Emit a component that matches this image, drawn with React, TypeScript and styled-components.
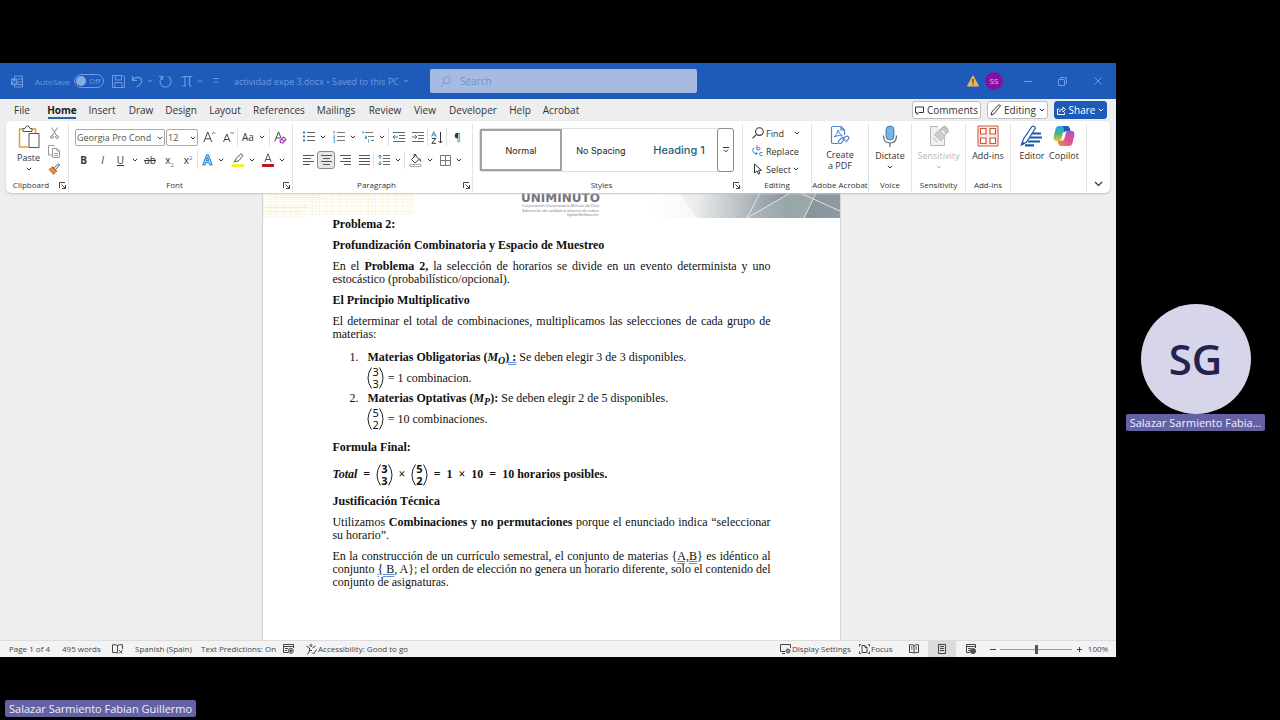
import React from "react";
import styled, { createGlobalStyle, css } from "styled-components";

const ui = `"Open Sans", "Noto Sans", sans-serif`;
const serif = `"Liberation Serif", serif`;

const GlobalStyle = createGlobalStyle`
  *, *::before, *::after { box-sizing: border-box; }
  body { margin: 0; background: #000; font-family: ${ui}; color: #333; }
  button, input, select { font-family: inherit; color: inherit; }
  h1, h2, p, ol { margin: 0; padding: 0; }
`;

/* ---------- Meeting stage ---------- */

const Stage = styled.div`
  min-height: 100vh;
  background: #000;
  display: grid;
  grid-template-columns: minmax(0, 1fr) 164px;
  grid-template-rows: 63px minmax(0, 1fr) 63px;
`;

const Participant = styled.aside`
  grid-column: 2;
  grid-row: 2;
  display: flex;
  flex-direction: column;
  align-items: center;
  justify-content: center;
  padding: 14px 5px 0 0;
`;

const BigAvatar = styled.div`
  width: 110px;
  height: 110px;
  border-radius: 50%;
  background: #d6d5e9;
  color: #25224f;
  display: flex;
  align-items: center;
  justify-content: center;
  font: 600 42px/1 ${ui};
`;

const NameTag = styled.div`
  height: 17px;
  padding: 0 4px;
  border-radius: 2px;
  background: #6462a3;
  color: #f1f0fa;
  font: 400 11px/17px ${ui};
  white-space: nowrap;
`;

const Footer = styled.footer`
  grid-column: 1 / -1;
  grid-row: 3;
  display: flex;
  align-items: flex-end;
  padding: 0 5px 3px;
`;

/* ---------- Window ---------- */

const Window = styled.main`
  grid-row: 2;
  display: flex;
  flex-direction: column;
  min-width: 0;
  background: #eeeeee;
  overflow: hidden;
`;

const TitleBar = styled.header`
  height: 36px;
  flex: none;
  display: flex;
  align-items: center;
  background: #1d5ab9;
  color: #6d9ae2;
  font-size: 9px;
`;

const TitleLeft = styled.div`
  flex: 0 0 430px;
  display: flex;
  align-items: center;
  padding-left: 11px;
`;

const BarButton = styled.button<{ $w: number }>`
  width: ${(p) => p.$w}px;
  height: 20px;
  padding: 0;
  border: 0;
  background: none;
  display: flex;
  align-items: center;
  justify-content: center;
  gap: 4px;
`;

const AutoSave = styled.label`
  display: flex;
  align-items: center;
  gap: 4px;
  margin: 0 6px 0 12px;
  font-size: 8px;
`;

const Toggle = styled.span`
  position: relative;
  width: 30px;
  height: 14px;
  border: 1px solid #6d9ae2;
  border-radius: 7px;
  padding-left: 14px;
  line-height: 12px;

  input {
    position: absolute;
    inset: 0;
    margin: 0;
    opacity: 0;
  }
  &::before {
    content: "";
    position: absolute;
    left: 1px;
    top: 1px;
    width: 10px;
    height: 10px;
    border-radius: 50%;
    background: #86ace8;
  }
`;

const FileName = styled.button`
  border: 0;
  padding: 0;
  margin-left: 10px;
  background: none;
  display: flex;
  align-items: center;
  gap: 4px;
  font-size: 9px;
  white-space: nowrap;
`;

const SearchBox = styled.label`
  flex: 0 1 267px;
  height: 24px;
  border-radius: 2px;
  background: #a6bbdf;
  display: flex;
  align-items: center;
  gap: 9px;
  padding: 0 10px;

  input {
    flex: 1;
    min-width: 0;
    border: 0;
    padding: 0;
    background: none;
    font-size: 10px;
    outline: 0;
  }
  input::placeholder { color: #6d92d4; opacity: 1; }
`;

const TitleRight = styled.div`
  margin-left: auto;
  display: flex;
  align-items: center;
  padding-right: 1px;
`;

const SmallAvatar = styled.button`
  width: 18px;
  height: 18px;
  margin: 0 7px 0 6px;
  padding: 0;
  border: 0;
  border-radius: 50%;
  background: #85109f;
  color: #e6c8ee;
  font-size: 8px;
  line-height: 18px;
`;

/* ---------- Tabs ---------- */

const TabRow = styled.nav`
  flex: none;
  height: 22px;
  display: flex;
  align-items: center;
  padding: 0 9px 0 6px;
`;

const Tab = styled.button<{ $w: number; $active?: boolean }>`
  width: ${(p) => p.$w}px;
  height: 22px;
  padding: 0;
  border: 0;
  background: none;
  font-size: 10px;
  white-space: nowrap;
  display: flex;
  align-items: center;
  justify-content: center;
  ${(p) =>
    p.$active &&
    css`
      font-weight: 700;
      color: #1c1c1c;
      position: relative;
      &::after {
        content: "";
        position: absolute;
        left: 10px;
        right: 10px;
        bottom: 2px;
        height: 2px;
        background: #2a63a8;
      }
    `}
`;

const TabActions = styled.div`
  margin-left: auto;
  display: flex;
  gap: 6px;
`;

const ActionButton = styled.button<{ $w: number; $primary?: boolean }>`
  width: ${(p) => p.$w}px;
  height: 18px;
  padding: 0;
  border: 1px solid ${(p) => (p.$primary ? "#1d5ab9" : "#bdbdbd")};
  border-radius: 3px;
  background: ${(p) => (p.$primary ? "#1d5ab9" : "#fff")};
  color: ${(p) => (p.$primary ? "#fff" : "#333")};
  display: flex;
  align-items: center;
  justify-content: center;
  gap: 3px;
  font-size: 10px;
  white-space: nowrap;
`;

/* ---------- Ribbon ---------- */

const Ribbon = styled.section`
  flex: none;
  height: 72px;
  margin: 0 6px;
  padding: 3px 0 1px;
  display: flex;
  background: #fff;
  border-radius: 5px;
  box-shadow: 0 1px 2px #c4c4c4;
  position: relative;
`;

const Group = styled.div<{ $w?: number }>`
  ${(p) => (p.$w ? `flex: 0 0 ${p.$w}px;` : "flex: 1 1 0;")}
  min-width: 0;
  display: flex;
  flex-direction: column;
  border-right: 1px solid #e3e3e3;
`;

const GroupBody = styled.div<{ $pad?: string }>`
  flex: 1;
  display: flex;
  padding: ${(p) => p.$pad ?? "0"};
`;

const GroupLabel = styled.div`
  height: 14px;
  display: flex;
  align-items: center;
  justify-content: center;
  font-size: 8px;
  line-height: 14px;
  white-space: nowrap;

  span { flex: 1; text-align: center; }
`;

const Launcher = styled.button`
  width: 12px;
  height: 12px;
  padding: 0;
  border: 0;
  background: none;
  display: flex;
  align-items: center;
  justify-content: center;
`;

const Rows = styled.div`
  flex: 1;
  display: flex;
  flex-direction: column;
  gap: 5px;
  padding-top: 4px;
`;

const ToolRow = styled.div<{ $pad: number }>`
  height: 18px;
  display: flex;
  align-items: center;
  padding-left: ${(p) => p.$pad}px;
`;

const Tool = styled.button<{ $w: number; $on?: boolean }>`
  width: ${(p) => p.$w}px;
  height: 18px;
  flex: none;
  padding: 0;
  border: ${(p) => (p.$on ? "1px solid #8a8a8a" : "0")};
  border-radius: 3px;
  background: ${(p) => (p.$on ? "#e6e6e6" : "none")};
  display: flex;
  align-items: center;
  justify-content: center;
  gap: 5px;
  font-size: 10px;
  line-height: 18px;

  sub, sup { font-size: 6px; line-height: 0; color: #2a86c8; }
`;

const Divider = styled.span`
  width: 1px;
  height: 18px;
  background: #e1e1e1;
`;

const Picker = styled.span<{ $w: number }>`
  position: relative;
  width: ${(p) => p.$w}px;
  height: 17px;
  margin-right: 1px;

  select {
    appearance: none;
    display: block;
    width: 100%;
    height: 17px;
    padding: 0 0 0 1px;
    border: 1px solid #a8a8a8;
    border-radius: 2px;
    background: #fff;
    font-size: 9px;
    line-height: 15px;
    color: #4e5546;
  }
  svg {
    position: absolute;
    right: 2px;
    top: 7px;
    color: #333;
    pointer-events: none;
  }
`;

const BigTool = styled.button<{ $muted?: boolean }>`
  flex: 1;
  min-width: 0;
  padding: 0;
  border: 0;
  background: none;
  color: ${(p) => (p.$muted ? "#b9b9b9" : "#333")};
  display: flex;
  flex-direction: column;
  align-items: center;
  font-size: 9px;
  line-height: 11px;
  white-space: nowrap;

  > svg:first-child { margin: 1px 0 3px; }
  span + svg { margin-top: 4px; }
`;

const ClipColumn = styled.div`
  display: flex;
  flex-direction: column;
  width: 20px;
`;

const Gallery = styled.div`
  flex: 1;
  height: 44px;
  margin: 4px 8px 0 6px;
  display: flex;
  border: 1px solid #e0e0e0;
  border-radius: 3px;
`;

const StyleCard = styled.button<{ $on?: boolean; $heading?: boolean }>`
  flex: 1;
  min-width: 0;
  padding: 0;
  background: none;
  border: ${(p) => (p.$on ? "2px solid #a3a3a3" : "0")};
  font-family: Inter, sans-serif;
  font-size: ${(p) => (p.$heading ? 11 : 9)}px;
  font-weight: ${(p) => (p.$heading ? 500 : 400)};
  color: ${(p) => (p.$heading ? "#1d6170" : "#222")};
  white-space: nowrap;
`;

const MoreButton = styled.button`
  width: 17px;
  margin: -1px;
  padding: 0;
  border: 1px solid #8d8d8d;
  border-radius: 3px;
  background: #fff;
  display: flex;
  align-items: center;
  justify-content: center;
`;

const EditList = styled.div`
  flex: 1;
  display: flex;
  flex-direction: column;
  align-items: flex-start;
  padding-left: 9px;
`;

const EditButton = styled.button<{ $wide?: boolean }>`
  height: 18px;
  padding: 0;
  border: 0;
  background: none;
  display: flex;
  align-items: center;
  gap: 2px;
  font-size: 9px;
  ${(p) =>
    p.$wide &&
    css`
      width: 48px;
      svg:last-child { margin-left: auto; }
    `}
`;

const Collapse = styled.button`
  flex: 0 0 23px;
  padding: 0 0 5px;
  border: 0;
  background: none;
  display: flex;
  align-items: flex-end;
  justify-content: center;
`;

/* ---------- Document ---------- */

const Canvas = styled.section`
  flex: 1;
  display: flex;
  justify-content: center;
  padding-right: 13px;
`;

const Paper = styled.article`
  flex: 0 1 577px;
  background: #fff;
  border: solid #d4d4d4;
  border-width: 0 1px;
`;

const Letterhead = styled.header`
  height: 25px;
  display: flex;
  justify-content: space-between;
`;

const Logo = styled.div`
  flex: 1;
  text-align: center;
  padding-left: 57px;
  white-space: nowrap;
  font: 400 4px/5px "Noto Sans", sans-serif;
  color: #777c8c;

  strong {
    display: block;
    padding-top: 1px;
    font: 700 12px/9px "DejaVu Sans", sans-serif;
    color: #73747a;
  }
  small { display: block; font-size: 3px; line-height: 4px; padding-left: 44px; }
`;

const Body = styled.div`
  padding: 0 69px;
  display: flex;
  flex-direction: column;
  gap: 8px;
  font: 400 12px/13px ${serif};
  color: #111;

  h2 { font: inherit; font-weight: 700; }
  p { text-align: justify; }
  sub { line-height: 0; }
`;

const FullLine = styled.span`
  display: block;
  white-space: nowrap;
  text-align-last: justify;
`;

const Steps = styled.ol`
  padding-top: 2px;
  && { padding-left: 35px; }
  li::marker { content: counter(list-item) ".\\00a0\\00a0\\00a0"; }
`;

const Equation = styled.div<{ $h: number; $bold?: boolean }>`
  height: ${(p) => p.$h}px;
  display: flex;
  align-items: center;
  gap: ${(p) => (p.$bold ? 6 : 4)}px;
  font-weight: ${(p) => (p.$bold ? 700 : 400)};
`;

const Pair = styled.span`
  display: inline-flex;
  align-items: center;

  span {
    font-family: "Noto Sans", sans-serif;
    font-size: 11px;
    line-height: 12px;
  }
`;

const Flag = styled.u`
  text-decoration: underline double #5b8ed8;
  text-underline-offset: 1px;
`;

/* ---------- Status bar ---------- */

const StatusBar = styled.footer`
  flex: none;
  height: 17px;
  display: flex;
  align-items: center;
  background: #f3f3f3;
  border-top: 1px solid #dcdcdc;
  padding: 0 6px 0 9px;
  font-size: 8px;
  color: #444;
`;

const Status = styled.button<{ $w: number; $on?: boolean; $center?: boolean }>`
  width: ${(p) => p.$w}px;
  height: 16px;
  flex: none;
  padding: 0;
  border: 0;
  background: ${(p) => (p.$on ? "#dcdcdc" : "none")};
  display: flex;
  align-items: center;
  justify-content: ${(p) => (p.$center ? "center" : "flex-start")};
  gap: 1px;
  font-size: 8px;
  line-height: 14px;
  white-space: nowrap;
`;

const StatusEnd = styled.div`
  margin-left: auto;
  display: flex;
  align-items: center;
`;

const Zoom = styled.input`
  appearance: none;
  width: 72px;
  height: 10px;
  margin: 0;
  background: linear-gradient(#9a9a9a, #9a9a9a) center / 100% 1px no-repeat;

  &::-webkit-slider-thumb {
    appearance: none;
    width: 3px;
    height: 9px;
    background: #555;
  }
`;

/* ---------- Icons ---------- */

type IconProps = { w: number; h: number; color?: string; children: React.ReactNode };
const Icon = ({ w, h, color = "currentColor", children }: IconProps) => (
  <svg width={w} height={h} viewBox={`0 0 ${w} ${h}`} fill="none" stroke={color} strokeWidth="1" aria-hidden="true">
    {children}
  </svg>
);

const Chev = ({ big }: { big?: boolean }) =>
  big ? (
    <Icon w={9} h={6}><path d="M1 1l3.5 3.5L8 1" strokeWidth="1.2" /></Icon>
  ) : (
    <Icon w={6} h={4}><path d="M.8.8L3 3 5.2.8" strokeWidth="1" /></Icon>
  );

const Launch = () => (
  <Icon w={7} h={7}><path d="M.5 6V.5H6M2.5 2.5l4 4M6.5 3v3.5H3" strokeWidth=".9" /></Icon>
);

const lines = (rows: [number, number][], y0 = 1, step = 3) =>
  rows.map(([a, b], i) => `M${a} ${y0 + 0.5 + i * step}H${b}`).join("");

const AlignIcon = ({ kind }: { kind: "l" | "c" | "r" | "j" }) => {
  const map: Record<string, [number, number][]> = {
    l: [[0, 11], [0, 8], [0, 11], [0, 7]],
    c: [[0, 11], [2, 9], [0, 11], [2, 9]],
    r: [[0, 11], [3, 11], [0, 11], [4, 11]],
    j: [[0, 11], [0, 11], [0, 11], [0, 11]],
  };
  return <Icon w={11} h={12} color="#555"><path d={lines(map[kind])} /></Icon>;
};

const Bullets = () => (
  <Icon w={12} h={12} color="#666">
    <path d="M4 1.5H12M4 5.5H12M4 9.5H12" />
    <path d="M0 1.5H2M0 5.5H2M0 9.5H2" stroke="#2b7fb8" strokeWidth="2" />
  </Icon>
);
const Numbers = () => (
  <Icon w={12} h={12} color="#777">
    <path d="M4 1.5H12M4 5.5H12M4 9.5H12" />
    <path d="M0 .8L1.2.3V3M.2 4.8H2L.3 7H2.2M.2 8.8H2L1 10l1 .6-.6 1H.2" stroke="#3595cf" strokeWidth=".8" />
  </Icon>
);
const Multi = () => (
  <Icon w={12} h={12} color="#777">
    <path d="M3 1.5H11M6 5.5H12M9 9.5H12" />
    <path d="M.4.8L1.2.3V3M3 5.2h1.6V7.5H3V6.4h1.6M6.6 8.6V11.5" stroke="#3595cf" strokeWidth=".9" />
  </Icon>
);
const Indent = ({ out }: { out?: boolean }) => (
  <Icon w={12} h={11} color="#666">
    <path d="M0 .5H12M6 3.5H12M6 6.5H12M0 9.5H12" />
    <path d={out ? "M5 5H0M2 3l-2 2 2 2" : "M0 5H5M3 3l2 2-2 2"} stroke="#2b7fb8" />
  </Icon>
);
const Sort = () => (
  <Icon w={12} h={13} color="#333">
    <path d="M.6 5.5L2.8.5 5 5.5M1.4 4H4.2" stroke="#2b8fd0" />
    <path d="M.8 7.500H4.800L.8 12.300H5M9.500 1V12M7.500 10l2 2 2-2" />
  </Icon>
);
const LineSpace = () => (
  <Icon w={12} h={12} color="#666">
    <path d="M5 1.500H12M5 4.500H12M5 7.500H12M5 10.500H12" />
    <path d="M2 1V5M.5 2.500L2 1l1.500 1.500M2 7V11M.5 9.500L2 11l1.500-1.500" stroke="#2b7fb8" />
  </Icon>
);
const Bucket = () => (
  <Icon w={13} h={13} color="#444">
    <path d="M2.500 5.500L6.500 1.500l3.500 4-4 3.500zM5 3V.5h2V2" />
    <path d="M10.500 4.500q1.500 2 .5 3" stroke="#2b7fb8" strokeWidth="1.400" />
    <path d="M1 10.500H12V12.500H1z" stroke="#aaa" />
  </Icon>
);
const Borders = () => (
  <Icon w={11} h={11} color="#777">
    <path d="M.5.5H10.500V10.500H.5zM5.500 0V11M0 5.500H11" />
  </Icon>
);

const PasteIcon = () => (
  <Icon w={22} h={24} color="#555">
    <path d="M5 4H1.500V22H10M14 4H17.500V8" stroke="#e79a3c" strokeWidth="1.500" />
    <path d="M5 6.500V3.500H7Q7.500 1 9.500 1T12 3.500H14V6.500zM11 8.500H21V22.500H11z" fill="#fff" />
  </Icon>
);
const Cut = () => (
  <Icon w={9} h={12} color="#8b8b8b">
    <path d="M1.500.5L6.500 8.500M7.500.5L2.500 8.500" />
    <circle cx="2" cy="10" r="1.400" /><circle cx="7" cy="10" r="1.400" />
  </Icon>
);
const Copy = () => (
  <Icon w={12} h={13} color="#9a9a9a">
    <path d="M4 10H.5V.5H6L7 1.500M4.500 3.500H9L11.500 6V12.500H4.500zM9 3.500V6h2.500M6 8.500h4M6 10.500h4" />
  </Icon>
);
const Painter = () => (
  <Icon w={12} h={12} color="#555">
    <path d="M1 6.500L4.500 4l4 4.500L5.500 11.500z" fill="#eb8b35" stroke="#d97a25" />
    <path d="M4.500 3.500l4.500 5M6.500 4.500L10.500.8l1 1.200L8 6" fill="#fff" />
  </Icon>
);

const TextEffects = () => (
  <Icon w={11} h={12} color="#1f6fb5">
    <path d="M.8 11L4.500.8H6.500L10.200 11H7.800L7 8.500H4L3.200 11zM4.500 6.500h2L5.500 3z" fill="#a9d5f2" strokeWidth=".9" />
  </Icon>
);
const Highlighter = () => (
  <Icon w={12} h={14} color="#555">
    <path d="M3 8L4.500 5 9 .8l2 1.700L7 7.500 4 8.800zM1.500 9.500L3 8" />
    <path d="M0 12.500H12" stroke="#f5f032" strokeWidth="3" />
  </Icon>
);
const FontColor = () => (
  <Icon w={12} h={14} color="#555">
    <path d="M2.800 9L6 .8 9.200 9M4 6.500H8" />
    <path d="M0 12.500H12" stroke="#bd1622" strokeWidth="3" />
  </Icon>
);
const GrowFont = ({ down }: { down?: boolean }) => (
  <Icon w={13} h={12} color="#444">
    {down ? <path d="M1.500 11L4.800 3l3.300 8M2.800 8.500h4" /> : <path d="M.8 11L4.800 1l4 10M2.300 7.800h5" />}
    <path d={down ? "M8.500 1l1.700 1.800L12 1" : "M9 3l1.600-1.800L12.300 3"} stroke="#2b7fb8" />
  </Icon>
);
const ClearFormat = () => (
  <Icon w={13} h={13} color="#444">
    <path d="M.8 10.500L4.500.8 7 7M2.200 7h4" />
    <path d="M6 9.500L9.500 6l2.500 2.500L8.800 12 6.500 11.500zM7.500 8l2.500 2.500" stroke="#a23fb8" strokeWidth="1.200" />
  </Icon>
);

const PdfIcon = () => (
  <Icon w={20} h={21} color="#4c83d4">
    <path d="M8 18.500H3Q1.500 18.500 1.500 17V3Q1.500 1.500 3 1.500H11L14.500 5V10M11 1.500V5h3.500" strokeWidth="1.200" />
    <path d="M4 12Q8 9 8 5q1 4 4.500 6Q8 9.500 4 12" />
    <path d="M12.500 14.500l3-3q2-1 3 .5t-.5 2.500l-2.500 2.500M15 14l-3 3q-1 2-2.500 1.500t-1-2.500l3-3q1.500-1 2.500 0" strokeWidth="1.200" />
  </Icon>
);
const Mic = () => (
  <Icon w={16} h={22} color="#666">
    <rect x="4" y="1" width="8" height="14" rx="4" fill="#78b4e4" stroke="#3a81bf" />
    <path d="M1.500 10.500q0 7.500 6.500 7.500t6.500-7.500M8 18V22" strokeWidth="1.200" />
  </Icon>
);
const SensitivityIcon = () => (
  <Icon w={20} h={22} color="#b5b5b5">
    <path d="M9 1.500H1.500V20.500H15.500V13" fill="#f0f0f0" />
    <path d="M4 12.500l4.500 5M5.500 9.500l6 6.500L16.500 11 10.500 5z" fill="#cfcfcf" />
    <path d="M11 6l3-4 5 4.500-3.500 3M12 3l6 5M15 .8l4.500 4" strokeWidth="1.500" />
  </Icon>
);
const AddIns = () => (
  <Icon w={22} h={22} color="#d2583c">
    <path d="M1 1H21V21H1z" fill="#fbeae5" />
    <path d="M3.500 3.500H9V9H3.500zM13 3.500h5.500V9H13zM3.500 13H9v5.500H3.500zM13 13h5.500v5.500H13z" fill="#fff" strokeWidth="1.200" />
  </Icon>
);
const EditorIcon = () => (
  <Icon w={24} h={22} color="#1f57ad">
    <path d="M12 8.500h9M9.500 12.500H22M8 16.500h12M5 20.300h9" strokeWidth="2.200" />
    <path d="M1.500 20L3.500 14 12 1.500q2-1 3.500 1.500L6.500 17z" fill="#fff" strokeWidth="1.200" />
    <path d="M1.500 20l1-3 1.800 1.500z" fill="#1f57ad" />
  </Icon>
);
const Copilot = () => (
  <svg width="22" height="22" viewBox="0 0 22 22" aria-hidden="true">
    <defs>
      <linearGradient id="cpA" x1="0" y1="0" x2="0" y2="1">
        <stop offset="0" stopColor="#27a5e8" /><stop offset=".5" stopColor="#3fb68b" /><stop offset="1" stopColor="#f2c22c" />
      </linearGradient>
      <linearGradient id="cpB" x1="1" y1="0" x2="0" y2="1">
        <stop offset="0" stopColor="#a04fe0" /><stop offset=".5" stopColor="#e2508f" /><stop offset="1" stopColor="#f9903c" />
      </linearGradient>
    </defs>
    <path d="M6 1h8q2 0 2.600 2l.8 3h-4q-1.500 0-2 1.500L9.500 14Q9 16 7 16H3.500Q0 16 .7 12L2.500 4Q3.300 1 6 1z" fill="url(#cpA)" />
    <path d="M10 1h4q2 0 2.600 2l.8 3h-4q-1.300 0-1.800 1z" fill="#2256c9" />
    <path d="M16 21H8q-2 0-2.600-2l-.8-3h4q1.500 0 2-1.500l1.900-6.500Q13 6 15 6h3.500q3.500 0 2.800 4L19.500 18q-.8 3-3.500 3z" fill="url(#cpB)" />
    <path d="M10 7.500h3l-2 7h-3z" fill="#fff" />
  </svg>
);

const SearchIcon = ({ s = 11 }: { s?: number }) => (
  <svg width={s} height={s} viewBox="0 0 11 11" fill="none" stroke="currentColor" aria-hidden="true">
    <circle cx="6.800" cy="4.200" r="3.500" /><path d="M4.200 6.800L.5 10.500" />
  </svg>
);
const ReplaceIcon = () => (
  <Icon w={12} h={12} color="#2b8fc8">
    <path d="M5 .5V5h1.500Q8 5 8 3.700T6.500 2.500H5" stroke="#b44ac0" />
    <path d="M2.500 3Q.5 3 .8 5.500T3 8.500H5M3.500 6.800L5.200 8.500 3.500 10.300M10.500 7.500Q7.500 6.700 7.500 9t3 1.700" />
  </Icon>
);
const Cursor = () => (
  <Icon w={12} h={12}><path d="M2.500 1V10L5 8l1.500 3.200 1.400-.7L6.500 7.300H9.500z" /></Icon>
);

const WordIcon = () => (
  <Icon w={12} h={13}>
    <path d="M3.500 3.500V1H11.500V12H3.500V10M7 4H11M7 7H11M7 9.500h4" />
    <path d="M0 3.500H6.500V10H0z" fill="currentColor" stroke="none" />
    <path d="M1.500 5l1 3.500L3.300 6l.8 2.500L5 5" stroke="#1d5ab9" strokeWidth=".8" />
  </Icon>
);
const Save = () => (
  <Icon w={13} h={13}><path d="M.5.5H11L12.500 2V12.500H.5zM3.500.5V5H9.500V.5M3 12V7.500h7V12" /></Icon>
);
const Undo = () => (
  <Icon w={12} h={13}><path d="M1.500 1v4.500H6M1.500 5.500Q4 1.500 8 2.500q3.500 1.500 2.500 5Q9.500 9.500 5.500 12" strokeWidth="1.200" /></Icon>
);
const Redo = () => (
  <Icon w={13} h={13}><path d="M0 1.500H3.500V5M8.500 1.500q4 1 3.500 5.500-1 5-5.500 5T1 7Q1 4 3.500 2" strokeWidth="1.200" /></Icon>
);
const Pi = () => (
  <Icon w={12} h={12}><path d="M.5 3Q1 1.500 3 1.500H11.500M4 1.500V11M1.500 11H5M8.500 1.500V10q0 1.200 2 1" strokeWidth="1.200" /></Icon>
);
const Customize = () => (
  <Icon w={6} h={6}><path d="M0 .5H6M1 2.800l2 2 2-2" /></Icon>
);
const Warning = () => (
  <Icon w={12} h={12}>
    <path d="M6 .8L11.500 11H.5z" fill="#f0b352" stroke="#e6b668" />
    <path d="M6 4v3.500M6 8.500v1.300" stroke="#493718" strokeWidth="1.300" />
  </Icon>
);

const tabs: [string, number][] = [
  ["File", 32], ["Home", 48], ["Insert", 32], ["Draw", 46], ["Design", 34], ["Layout", 54], ["References", 54],
  ["Mailings", 60], ["Review", 38], ["View", 42], ["Developer", 54], ["Help", 40], ["Acrobat", 42],
];

const Binomial = ({ top, bottom }: { top: number; bottom: number }) => (
  <Pair>
    <Icon w={5} h={22} color="#222"><path d="M4.500.5Q-2.500 11 4.500 21.500" /></Icon>
    <span>{top}<br />{bottom}</span>
    <Icon w={5} h={22} color="#222"><path d="M.5.5Q7.500 11 .5 21.500" /></Icon>
  </Pair>
);

const LeftArt = () => (
  <svg width="151" height="25" viewBox="0 0 151 25" aria-hidden="true">
    <defs>
      <pattern id="mesh" width="7" height="6" patternUnits="userSpaceOnUse">
        <path d="M0 .5H7M.5 0V6M3 3H7" stroke="#f6ecc0" fill="none" strokeWidth=".6" />
      </pattern>
    </defs>
    <path d="M0 0H151V22H60L40 25H0z" fill="#fffef8" />
    <path d="M0 0H151V22H60L40 25H0z" fill="url(#mesh)" opacity=".8" />
    <path d="M0 14.500H45M10 4.500H60M5 18.500H35" stroke="#f7ebbd" strokeWidth=".8" />
  </svg>
);
const RightArt = () => (
  <svg width="190" height="25" viewBox="0 0 190 25" aria-hidden="true">
    <defs>
      <linearGradient id="steel">
        <stop offset="0" stopColor="#fff" /><stop offset=".25" stopColor="#e9ebec" />
        <stop offset=".5" stopColor="#b3bbbf" /><stop offset=".72" stopColor="#82919a" /><stop offset="1" stopColor="#8f9aa0" />
      </linearGradient>
    </defs>
    <path d="M0 0H190V25H0z" fill="url(#steel)" />
    <path d="M30 0L47 25H0V0z" fill="#fff" opacity=".6" />
    <path d="M97 25L140 0H165L155 25z" fill="#aebbb9" opacity=".5" />
    <path d="M97 25L140 0M97 25L110 0M154 25L166 0M150 0L190 18" stroke="#e8eced" strokeWidth=".9" fill="none" />
  </svg>
);

export default function App() {
  return (
    <>
      <GlobalStyle />
      <Stage>
        <Window>
          <TitleBar>
            <TitleLeft>
              <WordIcon />
              <AutoSave>
                AutoSave
                <Toggle><input type="checkbox" aria-label="AutoSave" />Off</Toggle>
              </AutoSave>
              <BarButton $w={18} aria-label="Save"><Save /></BarButton>
              <BarButton $w={28} aria-label="Undo"><Undo /><Chev /></BarButton>
              <BarButton $w={20} aria-label="Redo"><Redo /></BarButton>
              <BarButton $w={32} aria-label="Equation"><Pi /><Chev /></BarButton>
              <BarButton $w={16} aria-label="Customize toolbar"><Customize /></BarButton>
              <FileName>actividad expe 3.docx • Saved to this PC <Chev /></FileName>
            </TitleLeft>
            <SearchBox>
              <SearchIcon />
              <input type="search" placeholder="Search" aria-label="Search" />
            </SearchBox>
            <TitleRight>
              <Warning />
              <SmallAvatar>SS</SmallAvatar>
              <BarButton $w={35} aria-label="Minimize"><Icon w={8} h={8}><path d="M0 4.500H8" /></Icon></BarButton>
              <BarButton $w={35} aria-label="Restore"><Icon w={9} h={9}><path d="M.5 2.500H6.500V8.500H.5zM2.500 2.500V.5H8.500V6.500H6.500" /></Icon></BarButton>
              <BarButton $w={35} aria-label="Close"><Icon w={8} h={8}><path d="M.5.5l7 7M7.500.5l-7 7" /></Icon></BarButton>
            </TitleRight>
          </TitleBar>

          <TabRow>
            {tabs.map(([name, w]) => (
              <Tab key={name} $w={w} $active={name === "Home"}>{name}</Tab>
            ))}
            <TabActions>
              <ActionButton $w={69}>
                <Icon w={9} h={9}><path d="M.5 1H8.500V6.500H4L2 8.500V6.500H.5z" /></Icon>Comments
              </ActionButton>
              <ActionButton $w={61}>
                <Icon w={11} h={12}><path d="M1 11l.8-3L8.500 1q1.500-.5 2 .8L3.800 10z" /></Icon>Editing <Chev />
              </ActionButton>
              <ActionButton $w={53} $primary>
                <Icon w={9} h={9}><path d="M2.500 3H.5V8.500H7.500V6.500M2.500 6Q3 3 6 3V1l2.500 2.500L6 6V4.500" /></Icon>Share <Chev />
              </ActionButton>
            </TabActions>
          </TabRow>

          <Ribbon>
            <Group $w={63}>
              <GroupBody $pad="0 3px 0 6px">
                <BigTool><PasteIcon /><span>Paste</span><Chev /></BigTool>
                <ClipColumn>
                  <Tool $w={18} aria-label="Cut"><Cut /></Tool>
                  <Tool $w={18} aria-label="Copy"><Copy /></Tool>
                  <Tool $w={18} aria-label="Format painter"><Painter /></Tool>
                </ClipColumn>
              </GroupBody>
              <GroupLabel><span>Clipboard</span><Launcher aria-label="Clipboard options"><Launch /></Launcher></GroupLabel>
            </Group>

            <Group $w={224}>
              <GroupBody>
                <Rows>
                  <ToolRow $pad={6}>
                    <Picker $w={90}><select aria-label="Font"><option>Georgia Pro Cond</option></select><Chev /></Picker>
                    <Picker $w={32}><select aria-label="Font size"><option>12</option></select><Chev /></Picker>
                    <Tool $w={20} aria-label="Grow font"><GrowFont /></Tool>
                    <Tool $w={18} aria-label="Shrink font"><GrowFont down /></Tool>
                    <Divider />
                    <Tool $w={31}>Aa <Chev /></Tool>
                    <Divider />
                    <Tool $w={20} aria-label="Clear formatting"><ClearFormat /></Tool>
                  </ToolRow>
                  <ToolRow $pad={5}>
                    <Tool $w={19}><b>B</b></Tool>
                    <Tool $w={19}><i>I</i></Tool>
                    <Tool $w={17}><u>U</u></Tool>
                    <Tool $w={11} aria-label="Underline styles"><Chev /></Tool>
                    <Tool $w={20}><s>ab</s></Tool>
                    <Tool $w={19}><span>x<sub>2</sub></span></Tool>
                    <Tool $w={18}><span>x<sup>2</sup></span></Tool>
                    <Divider />
                    <Tool $w={30} aria-label="Text effects"><TextEffects /><Chev /></Tool>
                    <Tool $w={30} aria-label="Highlight"><Highlighter /><Chev /></Tool>
                    <Tool $w={31} aria-label="Font color"><FontColor /><Chev /></Tool>
                  </ToolRow>
                </Rows>
              </GroupBody>
              <GroupLabel><span>Font</span><Launcher aria-label="Font options"><Launch /></Launcher></GroupLabel>
            </Group>

            <Group $w={180}>
              <GroupBody>
                <Rows>
                  <ToolRow $pad={6}>
                    <Tool $w={30} aria-label="Bullets"><Bullets /><Chev /></Tool>
                    <Tool $w={30} aria-label="Numbering"><Numbers /><Chev /></Tool>
                    <Tool $w={29} aria-label="Multilevel list"><Multi /><Chev /></Tool>
                    <Divider />
                    <Tool $w={20} aria-label="Decrease indent"><Indent out /></Tool>
                    <Tool $w={18} aria-label="Increase indent"><Indent /></Tool>
                    <Divider />
                    <Tool $w={18} aria-label="Sort"><Sort /></Tool>
                    <Divider />
                    <Tool $w={21}>¶</Tool>
                  </ToolRow>
                  <ToolRow $pad={6}>
                    <Tool $w={18} aria-label="Align left"><AlignIcon kind="l" /></Tool>
                    <Tool $w={18} $on aria-label="Center"><AlignIcon kind="c" /></Tool>
                    <Tool $w={20} aria-label="Align right"><AlignIcon kind="r" /></Tool>
                    <Tool $w={18} aria-label="Justify"><AlignIcon kind="j" /></Tool>
                    <Divider />
                    <Tool $w={30} aria-label="Line spacing"><LineSpace /><Chev /></Tool>
                    <Divider />
                    <Tool $w={32} aria-label="Shading"><Bucket /><Chev /></Tool>
                    <Tool $w={27} aria-label="Borders"><Borders /><Chev /></Tool>
                  </ToolRow>
                </Rows>
              </GroupBody>
              <GroupLabel><span>Paragraph</span><Launcher aria-label="Paragraph options"><Launch /></Launcher></GroupLabel>
            </Group>

            <Group>
              <GroupBody>
                <Gallery>
                  <StyleCard $on>Normal</StyleCard>
                  <StyleCard>No Spacing</StyleCard>
                  <StyleCard $heading>Heading 1</StyleCard>
                  <MoreButton aria-label="More styles"><Customize /></MoreButton>
                </Gallery>
              </GroupBody>
              <GroupLabel><span>Styles</span><Launcher aria-label="Style options"><Launch /></Launcher></GroupLabel>
            </Group>

            <Group $w={69}>
              <GroupBody>
                <EditList>
                  <EditButton $wide><SearchIcon s={12} />Find <Chev /></EditButton>
                  <EditButton><ReplaceIcon />Replace</EditButton>
                  <EditButton><Cursor />Select <Chev /></EditButton>
                </EditList>
              </GroupBody>
              <GroupLabel>Editing</GroupLabel>
            </Group>

            <Group $w={57}>
              <GroupBody>
                <BigTool><PdfIcon /><span>Create<br />a PDF</span></BigTool>
              </GroupBody>
              <GroupLabel>Adobe Acrobat</GroupLabel>
            </Group>

            <Group $w={43}>
              <GroupBody><BigTool><Mic /><span>Dictate</span><Chev /></BigTool></GroupBody>
              <GroupLabel>Voice</GroupLabel>
            </Group>

            <Group $w={54}>
              <GroupBody><BigTool $muted><SensitivityIcon /><span>Sensitivity</span><Chev /></BigTool></GroupBody>
              <GroupLabel>Sensitivity</GroupLabel>
            </Group>

            <Group $w={45}>
              <GroupBody><BigTool><AddIns /><span>Add-ins</span></BigTool></GroupBody>
              <GroupLabel>Add-ins</GroupLabel>
            </Group>

            <Group $w={76}>
              <GroupBody $pad="0 6px 0 5px">
                <BigTool><EditorIcon /><span>Editor</span></BigTool>
                <BigTool><Copilot /><span>Copilot</span></BigTool>
              </GroupBody>
            </Group>
            <Collapse aria-label="Collapse ribbon"><Chev big /></Collapse>
          </Ribbon>

          <Canvas>
            <Paper>
              <Letterhead>
                <LeftArt />
                <Logo>
                  <strong>UNIMINUTO</strong>
                  Corporación Universitaria Minuto de Dios
                  <br />
                  Educación de calidad al alcance de todos
                  <small>Vigilada MinEducación</small>
                </Logo>
                <RightArt />
              </Letterhead>
              <Body>
                <h2>Problema 2:</h2>
                <h2>Profundización Combinatoria y Espacio de Muestreo</h2>
                <p>
                  En el <b>Problema 2,</b> la selección de horarios se divide en un evento determinista y uno
                  estocástico (probabilístico/opcional).
                </p>
                <h2>El Principio Multiplicativo</h2>
                <p>El determinar el total de combinaciones, multiplicamos las selecciones de cada grupo de materias:</p>
                <Steps>
                  <li>
                    <b>Materias Obligatorias (<i>M<sub>O</sub></i><Flag>) :</Flag></b> Se deben elegir 3 de 3 disponibles.
                    <Equation $h={28}><Binomial top={3} bottom={3} /> = 1 combinacion.</Equation>
                  </li>
                  <li>
                    <b>Materias Optativas (<i>M<sub>P</sub></i>):</b> Se deben elegir 2 de 5 disponibles.
                    <Equation $h={28}><Binomial top={5} bottom={2} /> = 10 combinaciones.</Equation>
                  </li>
                </Steps>
                <h2>Formula Final:</h2>
                <Equation $h={25} $bold>
                  <i>Total</i>
                  <span>=</span>
                  <Binomial top={3} bottom={3} />
                  <span>×</span>
                  <Binomial top={5} bottom={2} />
                  <span>=</span>
                  <span>1</span>
                  <span>×</span>
                  <span>10</span>
                  <span>=</span>
                  <span>10 horarios posibles.</span>
                </Equation>
                <h2>Justificación Técnica</h2>
                <p>
                  Utilizamos <b>Combinaciones y no permutaciones</b> porque el enunciado indica “seleccionar su horario”.
                </p>
                <p>
                  <FullLine>
                    En la construcción de un currículo semestral, el conjunto de materias {"{"}<Flag>A,B</Flag>{"}"} es idéntico al
                  </FullLine>
                  <FullLine>
                    conjunto <Flag>{"{ "}B</Flag>, A{"}"}; el orden de elección no genera un horario diferente, solo el contenido del
                  </FullLine>
                  conjunto de asignaturas.
                </p>
              </Body>
            </Paper>
          </Canvas>

          <StatusBar>
            <Status $w={53}>Page 1 of 4</Status>
            <Status $w={50}>495 words</Status>
            <Status $w={23} aria-label="Proofing">
              <Icon w={11} h={10}><path d="M5.500 1.500V9M5.500 1.500Q3 .2.500.8V8.500Q3 8 5.500 9M5.500 1.500Q8 .2 10.500.8V5M7 6l3.500 3.500M10.500 6L7 9.500" /></Icon>
            </Status>
            <Status $w={66}>Spanish (Spain)</Status>
            <Status $w={82}>Text Predictions: On</Status>
            <Status $w={23} aria-label="Macros">
              <Icon w={11} h={10}><path d="M5 8.500H.5V.5H10.500V4M.5 2.500H10.500M2 4.500h3M2 6.500h2" /><circle cx="7.800" cy="6.800" r="2.500" /><circle cx="7.800" cy="6.800" r="1" fill="currentColor" /></Icon>
            </Status>
            <Status $w={110}>
              <Icon w={11} h={11}><circle cx="5" cy="1.500" r="1" /><path d="M.5 2L3.500 4V7L1.500 10.500M9.500 2L6.500 4M3.500 7L5 6l1 1M6 8.500L7.500 10 10.500 5.500" /></Icon>
              Accessibility: Good to go
            </Status>
            <StatusEnd>
              <Status $w={79}>
                <Icon w={11} h={10}><path d="M5 7.500H.5V.5H10.500V4M2 9.500h3" /><circle cx="8" cy="7" r="2" /><circle cx="8" cy="7" r=".5" /></Icon>
                Display Settings
              </Status>
              <Status $w={40}>
                <Icon w={11} h={10}><path d="M.5 2.500V.5H2M9 .5h1.500V2.500M.5 7.500V9.500H2M9 9.500h1.500V7.500M3 1.500H6L8 3.500V8.500H3zM6 1.500V3.500H8" /></Icon>
                Focus
              </Status>
              <Status $w={29} $center aria-label="Read mode">
                <Icon w={10} h={10}><path d="M5 1.500V9M5 1.500Q3 .2.500.8V8.500Q3 8 5 9 7 8 9.500 8.500V.8Q7 .2 5 1.500M2 3h1.500M2 5h1.500M6.500 3H8M6.500 5H8" /></Icon>
              </Status>
              <Status $w={28} $on $center aria-label="Print layout">
                <Icon w={8} h={10}><path d="M.5.5H7.500V9.500H.5zM2 2.500H6M2 4.500H6M2 6.500H6" /></Icon>
              </Status>
              <Status $w={30} $center aria-label="Web layout">
                <Icon w={10} h={10}><path d="M4 8.500H.5V.5H9.500V4M.5 2.500H9.500M2 4.500h3M2 6.500h2" /><circle cx="7" cy="7" r="2.500" fill="#555" /></Icon>
              </Status>
              <Status $w={14} $center aria-label="Zoom out"><Icon w={6} h={6}><path d="M0 3.500H6" /></Icon></Status>
              <Zoom type="range" min="0" max="100" defaultValue="50" aria-label="Zoom" />
              <Status $w={14} $center aria-label="Zoom in"><Icon w={7} h={7}><path d="M1 3.500H6M3.500 1V6" /></Icon></Status>
              <Status $w={24} $center>100%</Status>
            </StatusEnd>
          </StatusBar>
        </Window>

        <Participant>
          <BigAvatar>SG</BigAvatar>
          <NameTag>Salazar Sarmiento Fabia...</NameTag>
        </Participant>

        <Footer><NameTag>Salazar Sarmiento Fabian Guillermo</NameTag></Footer>
      </Stage>
    </>
  );
}
